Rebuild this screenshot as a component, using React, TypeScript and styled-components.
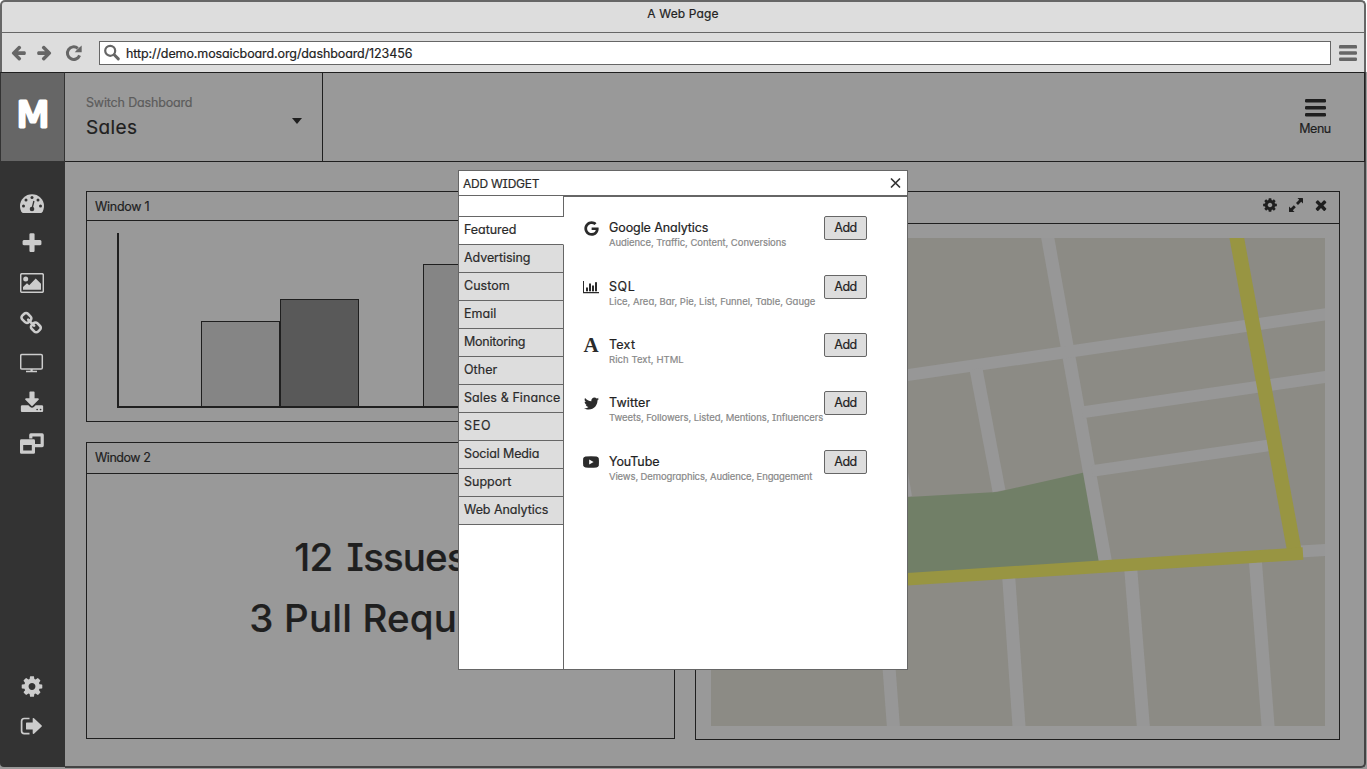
import React, { useLayoutEffect, useRef, useState } from "react";
import styled, { createGlobalStyle } from "styled-components";
import { FaGoogle, FaTwitter } from "react-icons/fa";

const ink = "#1f1f1f";
const line = "#666";

const GlobalStyle = createGlobalStyle`
  * { box-sizing: border-box; }
  body {
    margin: 0;
    background: #fff;
    overflow: hidden;
    font-family: Inter, "Liberation Sans", sans-serif;
    font-feature-settings: "cv11", "cv08";
  }
`;

/* ---------- text that tracks out to a given width ---------- */

const FitSpan = styled.span`
  display: inline-block;
  white-space: nowrap;
  -webkit-text-stroke: 0.2px currentColor;
`;

function Fit({ w, children }: { w: number; children: string }) {
  const ref = useRef<HTMLSpanElement>(null);
  const [spacing, setSpacing] = useState(0);
  useLayoutEffect(() => {
    const el = ref.current;
    if (el) {
      const natural = el.getBoundingClientRect().width;
      setSpacing((w + 0.3 - natural) / children.length);
    }
  }, [w, children]);
  return (
    <FitSpan ref={ref} style={{ letterSpacing: `${spacing}px` }}>
      {children}
    </FitSpan>
  );
}

/* ---------- icons ---------- */

const COG =
  "M1152 896q0-106-75-181t-181-75-181 75-75 181 75 181 181 75 181-75 75-181zm512-109v222q0 12-8 23t-20 13l-185 28q-19 54-39 91 35 50 107 138 10 12 10 25t-9 23q-27 37-99 108t-94 71q-12 0-26-9l-138-108q-44 23-91 38-16 136-29 186-7 28-36 28h-222q-14 0-24.5-8.5t-11.5-21.5l-28-184q-49-16-90-37l-141 107q-10 9-25 9-14 0-25-11-126-114-165-168-7-10-7-23 0-12 8-23 15-21 51-66.5t54-70.5q-27-50-41-99l-183-27q-13-2-21-12.5t-8-23.5v-222q0-12 8-23t19-13l186-28q14-46 39-92-40-57-107-138-10-12-10-24 0-10 9-23 26-36 98.5-107.5t94.5-71.5q13 0 26 10l138 107q44-23 91-38 16-136 29-186 7-28 36-28h222q14 0 24.5 8.5t11.5 21.5l28 184q49 16 90 37l142-107q9-9 24-9 13 0 25 10 129 119 165 170 7 8 7 22 0 12-8 23-15 21-51 66.5t-54 70.5q26 50 41 98l183 28q13 2 21 12.5t8 23.5z";
const TIMES =
  "M1490 1322q0 40-28 68l-136 136q-28 28-68 28t-68-28l-294-294-294 294q-28 28-68 28t-68-28l-136-136q-28-28-28-68t28-68l294-294-294-294q-28-28-28-68t28-68l136-136q28-28 68-28t68 28l294 294 294-294q28-28 68-28t68 28l136 136q28 28 28 68t-28 68l-294 294 294 294q28 28 28 68z";
const PLUS =
  "M1600 736v192q0 40-28 68t-68 28h-416v416q0 40-28 68t-68 28h-192q-40 0-68-28t-28-68v-416h-416q-40 0-68-28t-28-68v-192q0-40 28-68t68-28h416v-416q0-40 28-68t68-28h192q40 0 68 28t28 68v416h416q40 0 68 28t28 68z";
const ARROW =
  "M1664 896v128q0 53-32.5 90.5t-84.5 37.5h-704l293 294q38 36 38 90t-38 90l-75 76q-37 37-90 37-52 0-91-37l-651-652q-37-37-37-90 0-52 37-91l651-650q38-38 91-38 52 0 90 38l75 74q38 38 38 91t-38 91l-293 293h704q52 0 84.5 37.5t32.5 90.5z";
const DOWNLOAD =
  "M1344 1344q0-26-19-45t-45-19-45 19-19 45 19 45 45 19 45-19 19-45zm256 0q0-26-19-45t-45-19-45 19-19 45 19 45 45 19 45-19 19-45zm128-224v320q0 40-28 68t-68 28h-1472q-40 0-68-28t-28-68v-320q0-40 28-68t68-28h465l135 136q58 56 136 56t136-56l136-136h464q40 0 68 28t28 68zm-325-569q17 41-14 70l-448 448q-18 19-45 19t-45-19l-448-448q-31-29-14-70 17-39 59-39h256v-448q0-26 19-45t45-19h256q26 0 45 19t19 45v448h256q42 0 59 39z";
const LINK =
  "M1456 1216q0-40-28-68l-208-208q-28-28-68-28-42 0-72 32 3 3 19 18.5t21.5 21.5 15 19 13 25.5 3.5 27.5q0 40-28 68t-68 28q-15 0-27.5-3.5t-25.5-13-19-15-21.5-21.5-18.5-19q-33 31-33 73 0 40 28 68l206 207q27 27 68 27 40 0 68-26l147-146q28-28 28-67zm-703-705q0-40-28-68l-206-207q-28-28-68-28-39 0-68 27l-147 146q-28 28-28 67 0 40 28 68l208 208q27 27 68 27 42 0 72-31-3-3-19-18.5t-21.5-21.5-15-19-13-25.5-3.5-27.5q0-40 28-68t68-28q15 0 27.5 3.5t25.5 13 19 15 21.5 21.5 18.5 19q33-31 33-73zm895 705q0 120-85 203l-147 146q-83 83-203 83-121 0-204-85l-206-207q-83-83-83-203 0-123 88-209l-88-88q-86 88-208 88-120 0-204-84l-208-208q-84-84-84-204t85-203l147-146q83-83 203-83 121 0 204 85l206 207q83 83 83 203 0 123-88 209l88 88q86-88 208-88 120 0 204 84l208 208q84 84 84 204z";

function Glyph({ d, size, flip }: { d: string; size: number; flip?: boolean }) {
  return (
    <svg width={size} height={size} viewBox="0 0 1792 1792" fill="currentColor">
      <path d={d} transform={flip ? "translate(1792 0) scale(-1 1)" : undefined} />
    </svg>
  );
}

const ReloadIcon = () => (
  <svg width="18" height="18" viewBox="0 0 18 18">
    <path d="M14.600 11.400A6.300 6.300 0 1 1 12.800 4.300" fill="none" stroke="currentColor" strokeWidth="3" />
    <path d="M16.700 1.500V8.200H9.800L12.200 5.600L14.400 3.400Z" fill="currentColor" />
  </svg>
);

const SearchIcon = () => (
  <svg width="18" height="18" viewBox="0 0 18 18" fill="none" stroke="currentColor">
    <circle cx="7.200" cy="6.800" r="5" strokeWidth="2.200" />
    <path d="M11.200 10.800L15.300 14.900" strokeWidth="3" strokeLinecap="round" />
  </svg>
);

const BarsIcon = ({ w, h, t }: { w: number; h: number; t: number }) => (
  <svg width={w} height={h} fill="currentColor">
    <rect width={w} height={t} rx="1.200" />
    <rect y={(h - t) / 2} width={w} height={t} rx="1.200" />
    <rect y={h - t} width={w} height={t} rx="1.200" />
  </svg>
);

const GaugeIcon = () => (
  <svg width="24" height="20" viewBox="0 0 24 20">
    <path d="M0 12A12 11.800 0 0 1 24 12C24 14.500 23.300 16.800 22 18.600Q21.700 19 21 19H3Q2.300 19 2 18.600C.7 16.800 0 14.500 0 12Z" fill="currentColor" />
    <g fill="#333">
      <circle cx="3.500" cy="12" r="1.500" />
      <circle cx="6" cy="6" r="1.500" />
      <circle cx="12" cy="3.500" r="1.500" />
      <circle cx="18" cy="6" r="1.500" />
      <circle cx="20.500" cy="12" r="1.500" />
      <circle cx="12" cy="15" r="2.300" />
    </g>
    <path d="M12 15L13.900 7" stroke="#333" strokeWidth="1.300" />
  </svg>
);

const PictureIcon = () => (
  <svg width="24" height="20" viewBox="0 0 24 20">
    <rect x=".7" y=".7" width="22.600" height="18.600" rx="1.300" fill="none" stroke="currentColor" strokeWidth="1.500" />
    <circle cx="5.700" cy="6" r="2.500" fill="currentColor" />
    <path d="M3 16.700V14L7 10.200L9.200 12.200L15.700 5.500L21 10.800V16.700Z" fill="currentColor" />
  </svg>
);

const ScreenIcon = () => (
  <svg width="24" height="20" viewBox="0 0 24 20">
    <rect x=".7" y="1.500" width="21.600" height="14.600" rx="1.300" fill="none" stroke="currentColor" strokeWidth="1.500" />
    <path d="M10.500 16H12.700V17.700H17V19.300H6V17.700H10.500Z" fill="currentColor" />
  </svg>
);

const RestoreIcon = () => (
  <svg width="24" height="22" viewBox="0 0 24 22">
    <path d="M10.800 6.500V2.900H22.200V13.600H15" fill="none" stroke="currentColor" strokeWidth="3.200" strokeLinejoin="round" />
    <path fillRule="evenodd" d="M1.400 7.300H13.600Q15 7.300 15 8.700V20.400Q15 21.800 13.600 21.800H1.400Q0 21.800 0 20.400V8.700Q0 7.300 1.400 7.300ZM3.200 13V18.600H11.800V13Z" fill="currentColor" />
  </svg>
);

const SignOutIcon = () => (
  <svg width="24" height="20" viewBox="0 0 24 20">
    <path d="M9.500 2.500H4.200Q1.600 2.500 1.600 5.200V15Q1.600 17.600 4.200 17.600H9.500" fill="none" stroke="currentColor" strokeWidth="1.700" />
    <path d="M6 7.200Q6 6.500 6.700 6.500H12.700V2.300Q13.300 1.600 14 2.200L21.700 9.500Q22.200 10 21.700 10.600L14 17.800Q13.300 18.400 12.700 17.600V13.600H6.700Q6 13.600 6 12.900Z" fill="currentColor" />
  </svg>
);

const ExpandIcon = () => (
  <svg width="14" height="14" viewBox="0 0 14 14" fill="currentColor">
    <path d="M8.500 0H13.400Q14 0 14 .6V5.500L12.200 3.800L9 7L7 5L10.200 1.800Z" />
    <path d="M5.500 14H.6Q0 14 0 13.400V8.500L1.800 10.200L4.800 7.200L6.800 9.200L3.800 12.200Z" />
  </svg>
);

const ThinClose = () => (
  <svg width="11" height="11" viewBox="0 0 11 11" stroke="#333" strokeWidth="1.700" strokeLinecap="round">
    <path d="M1.500 1L9.500 9M9.500 1L1.500 9" />
  </svg>
);

const ChartIcon = () => (
  <svg width="16" height="13" viewBox="0 0 16 13" fill="currentColor">
    <path d="M0 0H1V11H16V12.200H0Z" />
    <rect x="3" y="6.500" width="2" height="3.800" />
    <rect x="6" y="2.500" width="2" height="7.800" />
    <rect x="9" y="4.500" width="2" height="5.800" />
    <rect x="12" y="1.200" width="2" height="9.100" />
  </svg>
);

const PlayIcon = () => (
  <svg width="16" height="12" viewBox="0 0 16 12">
    <path d="M2.500 .4Q8 0 13.500 .4Q15.600 .6 15.800 2.600Q16.100 6 15.800 9.200Q15.600 11.300 13.500 11.500Q8 11.900 2.500 11.500Q.4 11.300 .2 9.200Q-.1 6 .2 2.600Q.4 .6 2.500 .4Z" fill="currentColor" />
    <path d="M6.200 3.600L10.600 6L6.200 8.400Z" fill="#fff" />
  </svg>
);

/* ---------- browser chrome ---------- */

const Screen = styled.div`
  position: relative;
  width: 1367px;
  height: 769px;
  display: flex;
  flex-direction: column;
  overflow: hidden;
  color: ${ink};
`;

const Chrome = styled.header`
  width: 1366px;
  height: 72px;
  flex: none;
  background: #ddd;
  border: 2px solid ${line};
  border-bottom: 0;
  border-radius: 5px 5px 0 0;
  color: ${line};
`;

const TitleBar = styled.div`
  height: 31px;
  border-bottom: 1px solid ${line};
  text-align: center;
  font-size: 12px;
  line-height: 23px;
  color: #222;
`;

const Toolbar = styled.div`
  height: 39px;
  display: flex;
  align-items: center;
  padding: 0 7px 0 8px;
`;

const NavButtons = styled.div`
  display: flex;
  align-items: center;
  width: 89px;
  gap: 9px;
  svg:last-child { margin-left: 3px; }
`;

const UrlField = styled.div`
  flex: 1;
  height: 24px;
  margin-right: 8px;
  background: #fff;
  border: 1px solid ${line};
  display: flex;
  align-items: center;
  gap: 5px;
  padding-left: 3px;
  font-size: 12.5px;
  span { color: #222; margin-top: 2px; }
`;

/* ---------- dashboard ---------- */

const Body = styled.div`
  height: 697px;
  flex: none;
  display: flex;
  background: #999;
`;

const Sidebar = styled.nav`
  width: 65px;
  height: 695px;
  background: #333;
  display: flex;
  flex-direction: column;
  color: #ccc;
  border-radius: 0 0 0 4px;
`;

const Logo = styled.div`
  height: 89px;
  border: 1px solid #333;
  border-top-color: ${ink};
  border-bottom: 0;
  background: #666;
  display: flex;
  align-items: center;
  justify-content: center;
`;

const IconColumn = styled.div`
  flex: 1;
  display: flex;
  flex-direction: column;
  align-items: center;
  padding: 22px 0 21px;
  margin-right: 1px;
`;

const SideIcon = styled.div<{ $push?: boolean; $nudge?: number }>`
  width: 24px;
  height: 40px;
  flex: none;
  margin-top: ${(p) => (p.$push ? "auto" : "0")};
  padding-top: ${(p) => (p.$nudge ?? 0) * 2}px;
  display: flex;
  align-items: center;
  justify-content: center;
`;

const Workspace = styled.main`
  width: 1301px;
  height: 696px;
  border-right: 2px solid #444;
  border-bottom: 2px solid #444;
  border-radius: 0 0 5px 0;
`;

const TopBar = styled.div`
  height: 90px;
  margin-right: -1px;
  border: 1px solid ${ink};
  border-left: 0;
  display: flex;
  justify-content: space-between;
`;

const Switcher = styled.div`
  width: 258px;
  border-right: 1px solid ${ink};
  display: flex;
  align-items: center;
  justify-content: space-between;
  padding: 2px 20px 0 21px;
`;

const SwitchLabel = styled.div`
  font-size: 12.5px;
  line-height: 20px;
  color: #5c5c5c;
`;

const SwitchValue = styled.div`
  font-size: 19px;
  line-height: 30px;
`;

const Caret = styled.div`
  border: 5px solid transparent;
  border-top: 6px solid ${ink};
  border-bottom: 0;
  margin-top: 5px;
`;

const MenuButton = styled.div`
  width: 34px;
  margin: 26px 32px 0 0;
  display: flex;
  flex-direction: column;
  align-items: center;
  font-size: 12.5px;
  line-height: 24px;
`;

const Board = styled.div`
  display: flex;
  gap: 20px;
  padding: 29px 0 0 21px;
`;

const Column = styled.div`
  display: flex;
  flex-direction: column;
  gap: 20px;
`;

const Window = styled.section<{ $w: number; $h: number }>`
  width: ${(p) => p.$w}px;
  height: ${(p) => p.$h}px;
  border: 1px solid ${ink};
  display: flex;
  flex-direction: column;
`;

const WindowHead = styled.div<{ $h: number; $base?: number }>`
  height: ${(p) => p.$h}px;
  flex: none;
  border-bottom: 1px solid ${ink};
  padding: 0 10px ${(p) => p.$base ?? 1}px 8px;
  display: flex;
  align-items: center;
  justify-content: space-between;
  font-size: 12.5px;
`;

const WindowTools = styled.div`
  display: flex;
  align-items: center;
  gap: 10px;
  margin-top: -4px;
  svg:first-child { margin-right: 1px; }
`;

const ChartBox = styled.div`
  padding: 12px 0 0 30px;
`;

const MapBox = styled.div`
  padding: 14px 0 0 15px;
  svg { display: block; }
`;

const Stats = styled.div`
  padding-top: 53px;
  text-align: center;
  font-size: 38.500px;
  line-height: 61px;
  font-weight: 500;
`;

const StatLine = styled.div<{ $indent?: number; $gap: number }>`
  padding-left: ${(p) => p.$indent ?? 0}px;
  word-spacing: ${(p) => p.$gap}px;
`;

function BarChart() {
  return (
    <svg width="555" height="176" viewBox="117 233 555 176">
      <g stroke={ink}>
        <rect x="201.500" y="321.500" width="78" height="85" fill="#858585" />
        <rect x="280.500" y="299.500" width="78" height="107" fill="#595959" />
        <rect x="423.500" y="264.500" width="78" height="142" fill="#858585" />
        <rect x="502.500" y="280.500" width="78" height="126" fill="#595959" />
      </g>
      <path d="M118 233V407H660" fill="none" stroke={ink} strokeWidth="2" />
    </svg>
  );
}

function StreetMap() {
  return (
    <svg width="614" height="488" viewBox="711 238 614 488">
      <rect x="711" y="238" width="614" height="488" fill="#8c8b85" />
      <path d="M790 503L908 497L997 492L1084 472.500L1101 562L780 584Z" fill="#717f67" />
      <g stroke="#979797" strokeWidth="13" fill="none">
        <path d="M1046.700 232L1105.500 562" />
        <path d="M711 403.700L1335 312.900" strokeWidth="12" />
        <path d="M1082 412.400L1335 375.500" strokeWidth="12" />
        <path d="M1092 471L1268 445.500" strokeWidth="11.500" />
        <path d="M976 369L999 491" />
        <path d="M886 380L905.500 497" />
        <path d="M1300 551.600L1335 549.500" strokeWidth="12" />
        <path d="M882.500 580L893.800 732" />
        <path d="M1008.500 574L1019.400 732" />
        <path d="M1130.500 566L1143.800 732" />
        <path d="M1255.300 560L1268.500 732" />
      </g>
      <g stroke="#989542" fill="none">
        <path d="M1235.700 232L1295.500 557" strokeWidth="14.500" />
        <path d="M711 592L1303 553.600" strokeWidth="12.500" />
      </g>
    </svg>
  );
}

/* ---------- dialog ---------- */

const Dialog = styled.div`
  position: absolute;
  left: 458px;
  top: 170px;
  width: 450px;
  height: 500px;
  background: #fff;
  border: 1px solid ${line};
  display: flex;
  flex-direction: column;
  color: #2b2b2b;
`;

const DialogHead = styled.div`
  height: 25px;
  flex: none;
  border-bottom: 1px solid ${line};
  display: flex;
  align-items: center;
  justify-content: space-between;
  padding: 0 6px 0 4px;
  font-size: 12px;
`;

const DialogBody = styled.div`
  flex: 1;
  display: flex;
`;

const Tabs = styled.div`
  width: 105px;
  display: flex;
  flex-direction: column;
`;

const TabGap = styled.div<{ $fill?: boolean }>`
  height: ${(p) => (p.$fill ? "auto" : "21px")};
  flex: ${(p) => (p.$fill ? 1 : "none")};
  border-right: 1px solid ${line};
  border-bottom: ${(p) => (p.$fill ? "0" : `1px solid ${line}`)};
`;

const Tab = styled.div<{ $active?: boolean }>`
  height: 28px;
  flex: none;
  padding-left: 5px;
  font-size: 12.5px;
  line-height: 25px;
  border-bottom: 1px solid ${line};
  border-right: 1px solid ${(p) => (p.$active ? "transparent" : line)};
  background: ${(p) => (p.$active ? "#fff" : "#ddd")};
`;

const WidgetList = styled.div`
  flex: 1;
  border-top: 1px solid ${line};
  padding: 19px 0 0 19px;
`;

const WidgetRow = styled.div<{ $h: number }>`
  height: ${(p) => p.$h}px;
  display: flex;
  align-items: flex-start;
`;

const WidgetIcon = styled.div`
  width: 16px;
  height: 24px;
  display: flex;
  align-items: center;
  justify-content: center;
  margin-right: 10px;
`;

const LetterIcon = styled.b`
  font: bold 21px/24px "Liberation Serif", serif;
`;

const WidgetText = styled.div`
  width: 215px;
`;

const WidgetName = styled.div`
  padding-top: 1px;
  font-size: 12.5px;
  line-height: 22px;
  height: 22px;
  color: #222;
`;

const WidgetNote = styled.div`
  font-size: 9.5px;
  line-height: 10px;
  color: #888;
`;

const AddButton = styled.button`
  width: 43px;
  height: 24px;
  padding: 0;
  border: 1px solid ${line};
  border-radius: 2px;
  background: #ddd;
  font: 12.5px/20px Inter, sans-serif;
  color: #222;
`;

const tabs: [string, number][] = [
  ["Featured", 52],
  ["Advertising", 66],
  ["Custom", 45.5],
  ["Email", 32],
  ["Monitoring", 61],
  ["Other", 33],
  ["Sales & Finance", 96],
  ["SEO", 27],
  ["Social Media", 75],
  ["Support", 47],
  ["Web Analytics", 84],
];

const widgets = [
  { name: "Google Analytics", nw: 99, note: "Audience, Traffic, Content, Conversions", w: 177, h: 59, icon: <FaGoogle size={15} /> },
  { name: "SQL", nw: 26, note: "Lice, Area, Bar, Pie, List, Funnel, Table, Gauge", w: 206, h: 58, icon: <ChartIcon /> },
  { name: "Text", nw: 26, note: "Rich Text, HTML", w: 74.5, h: 58, icon: <LetterIcon>A</LetterIcon> },
  { name: "Twitter", nw: 41, note: "Tweets, Followers, Listed, Mentions, Influencers", w: 214, h: 59, icon: <FaTwitter size={15} /> },
  { name: "YouTube", nw: 50, note: "Views, Demographics, Audience, Engagement", w: 203, h: 58, icon: <PlayIcon /> },
];

export default function App() {
  return (
    <Screen>
      <GlobalStyle />
      <Chrome>
        <TitleBar>
          <Fit w={71}>A Web Page</Fit>
        </TitleBar>
        <Toolbar>
          <NavButtons>
            <Glyph d={ARROW} size={17} />
            <Glyph d={ARROW} size={17} flip />
            <ReloadIcon />
          </NavButtons>
          <UrlField>
            <SearchIcon />
            <Fit w={286}>http://demo.mosaicboard.org/dashboard/123456</Fit>
          </UrlField>
          <BarsIcon w={18} h={16} t={3.6} />
        </Toolbar>
      </Chrome>

      <Body>
        <Sidebar>
          <Logo>
            <svg width="60" height="60" viewBox="0 0 60 60">
              <g transform="translate(30 40.200) scale(1.060 1)">
                <text textAnchor="middle" fontFamily="'DejaVu Sans', sans-serif" fontSize="36" fill="#fff" stroke="#fff" strokeWidth="3" strokeLinejoin="round">
                  M
                </text>
              </g>
            </svg>
          </Logo>
          <IconColumn>
            <SideIcon $nudge={1}><GaugeIcon /></SideIcon>
            <SideIcon><Glyph d={PLUS} size={25} /></SideIcon>
            <SideIcon><PictureIcon /></SideIcon>
            <SideIcon><Glyph d={LINK} size={25} /></SideIcon>
            <SideIcon><ScreenIcon /></SideIcon>
            <SideIcon><Glyph d={DOWNLOAD} size={25} /></SideIcon>
            <SideIcon><RestoreIcon /></SideIcon>
            <SideIcon $push><Glyph d={COG} size={25} /></SideIcon>
            <SideIcon><SignOutIcon /></SideIcon>
          </IconColumn>
        </Sidebar>

        <Workspace>
          <TopBar>
            <Switcher>
              <div>
                <SwitchLabel><Fit w={106}>Switch Dashboard</Fit></SwitchLabel>
                <SwitchValue><Fit w={51}>Sales</Fit></SwitchValue>
              </div>
              <Caret />
            </Switcher>
            <MenuButton>
              <BarsIcon w={21} h={17.5} t={3.4} />
              <Fit w={31}>Menu</Fit>
            </MenuButton>
          </TopBar>

          <Board>
            <Column>
              <Window $w={589} $h={231}>
                <WindowHead $h={29} $base={0}><Fit w={54}>Window 1</Fit></WindowHead>
                <ChartBox><BarChart /></ChartBox>
              </Window>
              <Window $w={589} $h={297}>
                <WindowHead $h={31}><Fit w={55}>Window 2</Fit></WindowHead>
                <Stats>
                  <StatLine $gap={5}><Fit w={172}>12 Issues</Fit></StatLine>
                  <StatLine $gap={0} $indent={23}><Fit w={285}>3 Pull Requests</Fit></StatLine>
                </Stats>
              </Window>
            </Column>
            <Window $w={645} $h={549}>
              <WindowHead $h={32}>
                <Fit w={55}>Window 3</Fit>
                <WindowTools>
                  <Glyph d={COG} size={16} />
                  <ExpandIcon />
                  <Glyph d={TIMES} size={16} />
                </WindowTools>
              </WindowHead>
              <MapBox><StreetMap /></MapBox>
            </Window>
          </Board>
        </Workspace>
      </Body>

      <Dialog>
        <DialogHead>
          <Fit w={76}>ADD WIDGET</Fit>
          <ThinClose />
        </DialogHead>
        <DialogBody>
          <Tabs>
            <TabGap />
            {tabs.map(([name, w], i) => (
              <Tab key={name} $active={i === 0}>
                <Fit w={w}>{name}</Fit>
              </Tab>
            ))}
            <TabGap $fill />
          </Tabs>
          <WidgetList>
            {widgets.map((x) => (
              <WidgetRow key={x.name} $h={x.h}>
                <WidgetIcon>{x.icon}</WidgetIcon>
                <WidgetText>
                  <WidgetName><Fit w={x.nw}>{x.name}</Fit></WidgetName>
                  <WidgetNote><Fit w={x.w}>{x.note}</Fit></WidgetNote>
                </WidgetText>
                <AddButton><Fit w={22}>Add</Fit></AddButton>
              </WidgetRow>
            ))}
          </WidgetList>
        </DialogBody>
      </Dialog>
    </Screen>
  );
}
